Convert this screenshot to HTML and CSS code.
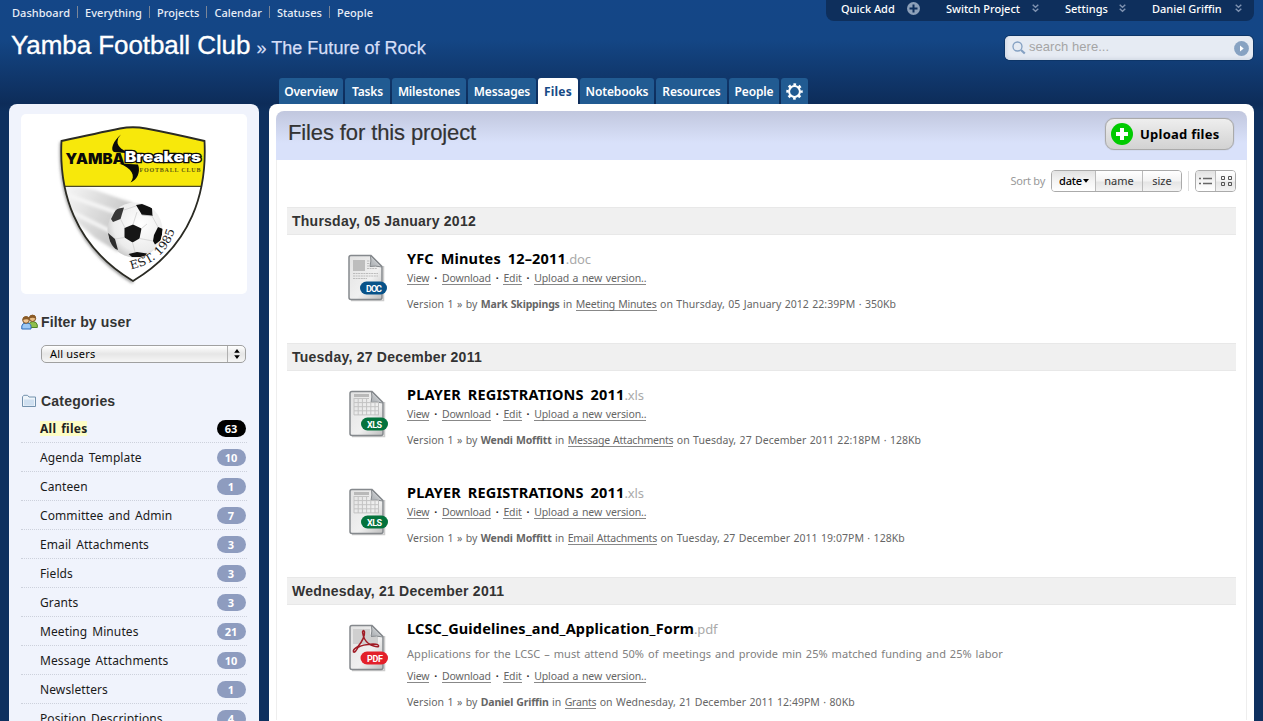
FILE: index.html
```html
<!DOCTYPE html>
<html lang="en">
<head>
<meta charset="utf-8">
<title>Files - Yamba Football Club</title>
<link rel="stylesheet" href="styles.css">
</head>
<body>
<svg class="defs" aria-hidden="true">
  <defs>
    <linearGradient id="paper" x1="0" y1="0" x2="1" y2="1"><stop offset="0" stop-color="#e2e2e2"/><stop offset=".6" stop-color="#f0f0f0"/><stop offset="1" stop-color="#bdbdbd"/></linearGradient>
    <linearGradient id="fold" x1="0" y1="1" x2="1" y2="0"><stop offset="0" stop-color="#a4a8ac"/><stop offset="1" stop-color="#e8eaec"/></linearGradient>
    <symbol id="page" viewBox="0 0 40 48">
      <path d="M3 46.600H35.500V12" fill="none" stroke="#ccc" stroke-width="1.500"/>
      <path d="M3 1.500H23L34 12.500V43.500Q34 45.500 32 45.500H3Q1 45.500 1 43.500V3.500Q1 1.500 3 1.500Z" fill="url(#paper)" stroke="#85898d" stroke-width="1.500"/>
      <path d="M22.500 1.500L34 13Q27 11.500 22 12.500Q23.500 7 22.500 1.500Z" fill="url(#fold)" stroke="#85898d"/>
    </symbol>
    <symbol id="chev" viewBox="0 0 7 9"><path d="M.7.800L3.500 3.300L6.300.800M.7 4.800L3.500 7.300L6.300 4.800" fill="none" stroke="#8094b2" stroke-width="1.400"/></symbol>
    <symbol id="xls" viewBox="0 0 40 48">
      <use href="#page" width="40" height="48"/>
      <path d="M5 5.500H20" stroke="#b9b9b9" stroke-width="3"/>
      <path d="M5 8V25M9.200 8V25M13.400 8V25M17.600 8V25M21.800 13V25M26 13V25M29.500 13V25M5 8.500H20M5 12.600H30M5 16.700H30M5 20.800H30M5 24.900H30" stroke="#c3c3c3" fill="none"/>
      <rect x="12" y="27.500" width="27" height="13" rx="6.500" fill="#04733d"/>
      <text x="18" y="37.500" textLength="15" class="ext-label">XLS</text>
    </symbol>
  </defs>
</svg>

<header class="top">
  <nav class="mainnav">
    <a>Dashboard</a><a>Everything</a><a>Projects</a><a>Calendar</a><a>Statuses</a><a>People</a>
  </nav>
  <div class="account">
    <span class="acc quick">Quick Add <svg width="13" height="13" viewBox="0 0 13 13"><circle cx="6.500" cy="6.500" r="6.500" fill="#8da0b9"/><path d="M6.500 2.500V10.500M2.500 6.500H10.500" stroke="#0e2f5c" stroke-width="2"/></svg></span>
    <span class="acc switch">Switch Project <svg width="7" height="9"><use href="#chev"/></svg></span>
    <span class="acc settings">Settings <svg width="7" height="9"><use href="#chev"/></svg></span>
    <span class="acc user">Daniel Griffin <svg width="7" height="9"><use href="#chev"/></svg></span>
  </div>
</header>

<div class="titlebar">
  <h1 class="club">Yamba Football Club <small class="sub">» The Future of Rock</small></h1>
  <div class="search">
    <svg width="14" height="14" viewBox="0 0 14 14"><circle cx="5.500" cy="5.500" r="4.500" fill="none" stroke="#84a0c2" stroke-width="1.300"/><path d="M9 9L12.800 12.500" stroke="#84a0c2" stroke-width="2.200"/></svg>
    <span class="hint">search here...</span>
    <svg width="15" height="15" viewBox="0 0 15 15"><circle cx="7.500" cy="7.500" r="7.400" fill="#87a2c2"/><path d="M6 4.500L9.700 7.500L6 10.500Z" fill="#fff"/></svg>
  </div>
</div>

<nav class="tabs">
  <a class="tab t-overview">Overview</a><a class="tab t-tasks">Tasks</a><a class="tab t-milestones">Milestones</a><a class="tab t-messages">Messages</a><a class="tab t-files on">Files</a><a class="tab t-notebooks">Notebooks</a><a class="tab t-resources">Resources</a><a class="tab t-people">People</a>
  <a class="tab t-gear"><svg width="17" height="17" viewBox="0 0 17 17"><circle cx="8.500" cy="8.500" r="7" fill="none" stroke="#fff" stroke-width="2.400" stroke-dasharray="2.700 2.800" stroke-dashoffset="1.350"/><circle cx="8.500" cy="8.500" r="5.400" fill="none" stroke="#fff" stroke-width="2"/></svg></a>
</nav>

<div class="columns">
  <aside class="side">
    <svg class="crest" width="226" height="180" viewBox="21 114 226 180">
      <defs>
        <clipPath id="shield"><path d="M61.500 141Q98 133 120 128.500Q133 126 146 128.500Q170 133 204.500 141C207 190 193 245 133 281C73 245 59 190 61.500 141Z"/></clipPath>
        <linearGradient id="trail" x1="66" y1="190" x2="125" y2="225" gradientUnits="userSpaceOnUse"><stop offset="0" stop-color="#f5f5f5"/><stop offset="1" stop-color="#c5c5c5"/></linearGradient>
        <radialGradient id="ball" cx=".6" cy=".4" r=".65"><stop offset="0" stop-color="#fff"/><stop offset=".75" stop-color="#ececec"/><stop offset="1" stop-color="#c8c8c8"/></radialGradient>
        <filter id="soft"><feGaussianBlur stdDeviation="1.800"/></filter>
        <path id="arc" d="M131 269.500C155 264 171 250 176 225"/>
        <clipPath id="ballclip"><circle cx="135" cy="230" r="27.500"/></clipPath>
      </defs>
      <path d="M61.500 142C59 190 73 246 133 282" fill="none" stroke="#888" stroke-width="3" filter="url(#soft)"/>
      <g clip-path="url(#shield)">
        <path d="M55 120H215V285H55Z" fill="#fff"/>
        <path d="M60 183L95 190L133 203L118 252L95 238L70 216Z" fill="url(#trail)" filter="url(#soft)"/>
        <path d="M64 194L118 213M68 210L112 232" stroke="#f5f5f5" stroke-width="4" filter="url(#soft)"/>
        <path d="M55 120H215V186H55Z" fill="#f7e80b"/>
        <path d="M55 186.300H215" stroke="#4c4a28" stroke-width="1.200"/>
      </g>
      <path d="M61.500 141Q98 133 120 128.500Q133 126 146 128.500Q170 133 204.500 141C207 190 193 245 133 281C73 245 59 190 61.500 141Z" fill="none" stroke="#2b2b24" stroke-width="1.800"/>
      <circle cx="135" cy="230" r="27.500" fill="url(#ball)"/>
      <g clip-path="url(#ballclip)">
        <path d="M111 219L116 209L124 207.500L120.500 219L113 222Z" fill="#383838"/>
        <path d="M136 205L142 204L152 208L152.500 216L142 215Z" fill="#111"/>
        <path d="M124.500 228L133 224.500L141.500 228.500L139.500 238.500L132.500 242.500L124.500 237.500Z" fill="#161616"/>
        <path d="M154 235L158 227L163 229L161 240L155 244.500L153 241Z" fill="#0c0c0c"/>
        <path d="M108 233L115 239L118 250L111 247Z" fill="#2d2d2d"/>
        <path d="M128.500 254L137 252L147 253.500L144 257H132Z" fill="#111"/>
        <path d="M120.500 219L125 228M137 212L133 224.500M142 215L152 216L158 227M141.500 228.500L147 224M139.500 238.500L153 241M132.500 242.500L135 252M124.500 237.500L115 239M136 206L124 210" stroke="#d0d0d0" stroke-width=".8" fill="none"/>
      </g>
      <path d="M121 134.500C113 141 110 150 114 152L131 153.500C124 151 117 147 117.500 141.500Q118 137 121 134.500Z" fill="#0a0a0a"/>
      <path d="M119 163.500L138 164.500C141 172 137 180 130.500 182.500C136 176 132 168 119 163.500Z" fill="#0a0a0a"/>
      <text x="65.500" y="164" textLength="59" lengthAdjust="spacingAndGlyphs" class="crest-yamba">YAMBA</text>
      <text x="125" y="161.500" textLength="76" lengthAdjust="spacingAndGlyphs" class="crest-breakers">Breakers</text>
      <text x="139.500" y="172" textLength="61" class="crest-fc">FOOTBALL CLUB</text>
      <text class="crest-est"><textPath href="#arc" textLength="62" lengthAdjust="spacingAndGlyphs">EST. 1985</textPath></text>
    </svg>

    <h2 class="side-title filter"><svg width="17" height="16" viewBox="0 0 17 16">
      <path d="M8 13.500V10.500Q8.500 7.500 12 7.500Q16 8 16.300 11V13.500Z" fill="#8fbf4d" stroke="#4f8428"/>
      <circle cx="11.500" cy="4.300" r="3.200" fill="#e9bd86" stroke="#7d5325"/><path d="M8.300 4.500Q8.500.8 12 1Q15 1.300 14.700 5Q12.500 3 8.300 4.500Z" fill="#8a5a26"/>
      <path d="M.8 15V12Q1.200 9 5 9Q9.600 9 10 12V15Z" fill="#9cc8f5" stroke="#2c6cb8"/>
      <circle cx="5" cy="6" r="3.300" fill="#f2c794" stroke="#7d5325"/><path d="M1.700 6Q1.600 2.200 5.200 2.300Q8.500 2.500 8.300 6.300Q6.500 4.300 1.700 6Z" fill="#8a5a26"/>
    </svg>Filter by user</h2>
    <div class="select"><span class="select-text">All users</span><span class="select-arrows"><svg width="6" height="10" viewBox="0 0 6 10"><path d="M3 0L5.800 3.800H.2ZM3 10L5.800 6.200H.2Z" fill="#000"/></svg></span></div>

    <h2 class="side-title cats-title"><svg width="17" height="14" viewBox="0 0 17 14"><path d="M1.500 12.500V2.800L2.800 1.300H6.500L8 3H14.500V12.500Z" fill="#eef4fa" stroke="#7391ad"/><path d="M3 5.500H13V11.500H3Z" fill="#cfdff0"/></svg>Categories</h2>
    <ul class="cats">
      <li class="cat on"><span class="name">All files</span><b class="count">63</b></li>
      <li class="cat"><span class="name">Agenda Template</span><b class="count">10</b></li>
      <li class="cat"><span class="name">Canteen</span><b class="count">1</b></li>
      <li class="cat"><span class="name">Committee and Admin</span><b class="count">7</b></li>
      <li class="cat"><span class="name">Email Attachments</span><b class="count">3</b></li>
      <li class="cat"><span class="name">Fields</span><b class="count">3</b></li>
      <li class="cat"><span class="name">Grants</span><b class="count">3</b></li>
      <li class="cat"><span class="name">Meeting Minutes</span><b class="count">21</b></li>
      <li class="cat"><span class="name">Message Attachments</span><b class="count">10</b></li>
      <li class="cat"><span class="name">Newsletters</span><b class="count">1</b></li>
      <li class="cat"><span class="name">Position Descriptions</span><b class="count">4</b></li>
    </ul>
  </aside>

  <main class="main">
    <div class="head">
      <h2 class="head-title">Files for this project</h2>
      <button class="upload"><svg width="22" height="22" viewBox="0 0 22 22"><circle cx="11" cy="11" r="11" fill="#00cb00"/><path d="M11 5V17M5 11H17" stroke="#fff" stroke-width="4"/></svg>Upload files</button>
    </div>
    <div class="content">
      <div class="sort">
        <span class="sort-label">Sort by</span>
        <div class="group"><span class="seg date on">date<svg width="6" height="4" viewBox="0 0 6 4"><path d="M0 0H6L3 3.800Z" fill="#000"/></svg></span><span class="seg by-name">name</span><span class="seg size">size</span></div>
        <i class="divider"></i>
        <div class="group"><span class="seg view on"><svg width="13" height="9" viewBox="0 0 13 9"><path d="M0 1.500H2M0 6.500H2" stroke="#666" stroke-width="1.500"/><path d="M4 1.500H13M4 6.500H13" stroke="#666" stroke-width="1.500"/></svg></span><span class="seg view"><svg width="12" height="12" viewBox="0 0 12 12"><path d="M1.500 1.500H4.500V4.500H1.500ZM8.500 1.500H11.500V4.500H8.500ZM1.500 7.500H4.500V10.500H1.500ZM8.500 7.500H11.500V10.500H8.500Z" fill="none" stroke="#555"/></svg></span></div>
      </div>

      <h3 class="day">Thursday, 05 January 2012</h3>
      <article class="file">
        <svg class="ico doc" width="40" height="48" viewBox="0 0 40 48">
          <use href="#page" width="40" height="48"/>
          <rect x="5" y="6" width="12" height="11" fill="#bdbdbd"/>
          <path d="M19 7H22M19 9.500H22M19 12H22M19 14.500H29M5 19.500H30M5 22H30M5 24.500H19" stroke="#bcbcbc" stroke-dasharray="2 .6"/>
          <rect x="12" y="27.500" width="27" height="13" rx="6.500" fill="#075289"/>
          <text x="18" y="37.500" textLength="16" class="ext-label">DOC</text>
        </svg>
        <div class="info">
          <h4 class="fname">YFC Minutes 12–2011<span class="ext">.doc</span></h4>
          <p class="acts"><a>View</a><i>·</i><a>Download</a><i>·</i><a>Edit</a><i>·</i><a class="new">Upload a new version..</a></p>
          <p class="meta">Version 1 » by <b>Mark Skippings</b> in <a>Meeting Minutes</a> on Thursday, 05 January 2012 22:39PM · 350Kb</p>
        </div>
      </article>

      <h3 class="day">Tuesday, 27 December 2011</h3>
      <article class="file">
        <svg class="ico" width="40" height="48"><use href="#xls"/></svg>
        <div class="info">
          <h4 class="fname">PLAYER REGISTRATIONS 2011<span class="ext">.xls</span></h4>
          <p class="acts"><a>View</a><i>·</i><a>Download</a><i>·</i><a>Edit</a><i>·</i><a class="new">Upload a new version..</a></p>
          <p class="meta">Version 1 » by <b>Wendi Moffitt</b> in <a>Message Attachments</a> on Tuesday, 27 December 2011 22:18PM · 128Kb</p>
        </div>
      </article>
      <article class="file">
        <svg class="ico" width="40" height="48"><use href="#xls"/></svg>
        <div class="info">
          <h4 class="fname">PLAYER REGISTRATIONS 2011<span class="ext">.xls</span></h4>
          <p class="acts"><a>View</a><i>·</i><a>Download</a><i>·</i><a>Edit</a><i>·</i><a class="new">Upload a new version..</a></p>
          <p class="meta">Version 1 » by <b>Wendi Moffitt</b> in <a>Email Attachments</a> on Tuesday, 27 December 2011 19:07PM · 128Kb</p>
        </div>
      </article>

      <h3 class="day">Wednesday, 21 December 2011</h3>
      <article class="file">
        <svg class="ico" width="40" height="48" viewBox="0 0 40 48">
          <use href="#page" width="40" height="48"/>
          <path d="M4 5H21V13H29V20H4Z" fill="#cfcfcf"/>
          <path d="M4.500 28Q3.500 25.500 9 22.500Q16 14 15.500 8Q14.500 5 13.500 8Q14.500 16 20 20Q27 23.500 29.500 22.500Q30.500 20 24 20Q13 20.500 9 23.500Q6 29 4.500 28Z" fill="none" stroke="#a01b25" stroke-width="1.500"/>
          <rect x="11.500" y="27.500" width="27.500" height="13" rx="6.500" fill="#e3202a"/>
          <text x="18" y="37.500" textLength="16" class="ext-label">PDF</text>
        </svg>
        <div class="info">
          <h4 class="fname">LCSC_Guidelines_and_Application_Form<span class="ext">.pdf</span></h4>
          <p class="desc">Applications for the LCSC – must attend 50% of meetings and provide min 25% matched funding and 25% labor</p>
          <p class="acts"><a>View</a><i>·</i><a>Download</a><i>·</i><a>Edit</a><i>·</i><a class="new">Upload a new version..</a></p>
          <p class="meta">Version 1 » by <b>Daniel Griffin</b> in <a>Grants</a> on Wednesday, 21 December 2011 12:49PM · 80Kb</p>
        </div>
      </article>
    </div>
  </main>
</div>
</body>
</html>
```
FILE: styles.css
```css
* { box-sizing: border-box; margin: 0; padding: 0; }
html { height: 100%; overflow: hidden; }
body {
  height: 721px;
  overflow: hidden;
  display: flex;
  flex-direction: column;
  background: #0e305f linear-gradient(#144687 0, #144685 40px, #0d2c59 104px, #0e305f 112px) no-repeat 0 0 / 100% 112px;
  font-family: "Noto Sans", "Open Sans", sans-serif;
  font-size: 11px;
  color: #222;
}
svg { display: block; flex: none; }
.defs { width: 0; height: 0; position: absolute; }

/* top bar */
.top { display: flex; justify-content: space-between; height: 24px; flex: none; padding: 0 9px 0 12px; }
.mainnav { display: flex; height: 24px; align-items: center; color: #e9eef7; font-weight: 500; letter-spacing: .04px; }
.mainnav a { padding-right: 7px; margin-right: 7px; border-right: 1px solid #7b8698; height: 12px; line-height: 13px; white-space: nowrap; }
.mainnav a:last-child { border: 0; }
.account { display: flex; width: 428px; height: 21px; background: #0e2f5c; border-radius: 0 0 8px 8px; color: #fff; font-weight: 500; padding: 0 12px 0 15px; justify-content: space-between; }
.acc { display: flex; align-items: center; justify-content: space-between; height: 16px; white-space: nowrap; }
.quick { width: 79px; }
.switch { width: 93px; }
.settings { width: 61px; }
.user { width: 90px; }

/* title */
.titlebar { display: flex; justify-content: space-between; height: 54px; flex: none; padding: 0 10px 0 11px; }
.club { font: 400 26px/30px "Liberation Sans", Arial, sans-serif; color: #fff; padding-top: 6px; letter-spacing: -.08px; -webkit-text-stroke: .35px #fff; }
.sub { font-size: 18px; letter-spacing: .02px; color: #d5def7; margin-left: -1px; -webkit-text-stroke: .25px #d5def7; }
.search { display: flex; align-items: center; width: 248px; height: 24px; margin-top: 12px; background: #e6ebf3; border-radius: 5px; padding: 0 4px 0 7px; box-shadow: 0 0 0 1px #0d3567, inset 2px -2px 3px #d5dbe6; }
.hint { flex: 1; font: 13px/20px "Liberation Sans", Arial, sans-serif; color: #a5a5a5; padding: 0 0 2px 3px; letter-spacing: .05px; }

/* tabs */
.tabs { display: flex; gap: 2px; height: 26px; flex: none; padding-left: 279px; }
.tab { display: flex; align-items: center; justify-content: center; height: 26px; padding-top: 1px; border-radius: 3px 3px 0 0; background: #215b92; color: #fff; font-weight: 600; font-size: 12px; letter-spacing: -.15px; }
.tab.on { background: #fff; color: #164a86; font-weight: 700; letter-spacing: .2px; }
.t-overview { width: 64px; }
.t-tasks { width: 45px; }
.t-milestones { width: 74px; }
.t-messages { width: 68px; }
.t-files { width: 40px; }
.t-notebooks { width: 74px; }
.t-resources { width: 71px; }
.t-people { width: 50px; }
.t-gear { width: 27px; }

.columns { display: flex; flex: 1; min-height: 0; gap: 10px; padding: 0 9px; }

/* sidebar */
.side { width: 250px; flex: none; background: #f0f3fc; border-radius: 8px 8px 0 0; padding: 10px 12px 0; }
.crest { background: #fff; border-radius: 5px; }
.crest-yamba { font: 900 14px Inter, sans-serif; fill: #0a0a0a; }
.crest-breakers { font: 900 14px Inter, sans-serif; fill: #fff; stroke: #0a0a0a; stroke-width: 2.400px; paint-order: stroke; }
.crest-fc { font: 700 6px "Liberation Serif", serif; fill: #5e5a10; }
.crest-est { font: 400 11.500px "DejaVu Serif", serif; fill: #1a1a1a; }
.side-title { display: flex; align-items: center; gap: 3px; font: 700 14px/20px "Liberation Sans", Arial, sans-serif; color: #333; height: 20px; letter-spacing: .2px; }
.filter { margin-top: 18px; letter-spacing: .15px; }
.select { display: flex; margin: 13px 0 0 20px; width: 205px; height: 18px; border: 1px solid #a0a0a0; border-radius: 5px; background: linear-gradient(#fff, #e6e6e6 50%, #f6f6f6); align-items: center; }
.select-text { flex: 1; padding-left: 8px; letter-spacing: .2px; color: #000; line-height: 16px; }
.select-arrows { width: 18px; height: 16px; border-left: 1px solid #b0b0b0; display: flex; align-items: center; justify-content: center; }
.cats-title { margin-top: 28px; }
.cats { list-style: none; padding-top: 3px; }
.cat { display: flex; align-items: center; justify-content: space-between; height: 29px; padding: 0 1px 0 19px; border-bottom: 1px dotted #cdd1dc; font-size: 12px; letter-spacing: .1px; word-spacing: 1.600px; color: #1a1a1a; }
.cat.on .name { background: #fdfdc5; font-weight: 700; letter-spacing: .25px; line-height: 15px; color: #222; }
.count { width: 29px; height: 17px; border-radius: 9px; background: #8e9cbf; color: #fff; text-align: center; padding-right: 1px; font-size: 11px; line-height: 17px; letter-spacing: 0; }
.cat.on .count { background: #000; }

/* main panel */
.main { width: 985px; background: #fff; border-radius: 8px 8px 0 0; padding: 7px 7px 0; }
.head { display: flex; justify-content: space-between; height: 49px; border-radius: 8px 8px 0 0; background: linear-gradient(#c1c7de, #d9e1fa 65%); padding: 7px 13px 0 12px; }
.head-title { font: 400 22px/30px "Liberation Sans", Arial, sans-serif; letter-spacing: -.12px; color: #333; -webkit-text-stroke: .2px #333; }
.upload { display: flex; align-items: center; gap: 7px; width: 129px; height: 32px; border: 1px solid #aaa; border-radius: 9px; background: linear-gradient(#eee, #d2d2d2); padding-left: 5px; font: 700 13px "Noto Sans", sans-serif; letter-spacing: .25px; color: #000; white-space: nowrap; box-shadow: 0 0 1px #999; }
.content { border: 1px solid #eee; border-width: 0 1px; padding: 10px 10px 0; height: 560px; }
.sort { display: flex; justify-content: flex-end; height: 37px; }
.sort-label { line-height: 22px; color: #999; letter-spacing: -.25px; margin-right: 6px; }
.group { display: flex; height: 22px; border: 1px solid #aaa; border-radius: 4px; overflow: hidden; }
.seg { display: flex; align-items: center; justify-content: center; background: linear-gradient(#fff, #f3f3f3 50%, #e5e5e5 55%, #f3f3f3); color: #333; border-left: 1px solid #bbb; line-height: 18px; padding-bottom: 1px; }
.seg:first-child { border: 0; }
.seg.on { background: linear-gradient(#e2e2e2, #f4f4f4 50%, #fff); color: #000; }
.date { width: 43px; gap: 1px; font-weight: 500; letter-spacing: -.15px; padding-left: 1px; }
.by-name { width: 47px; }
.size { width: 39px; }
.view { width: 20px; padding: 0; }
.view.on { width: 19px; }
.divider { width: 1px; height: 20px; margin: 1px 6px; background: #ddd; }

.day { height: 28px; border: 1px solid #e8e8e8; border-width: 1px 0; background: #f0f0f0; padding-left: 5px; font: 700 14px/26px "Liberation Sans", Arial, sans-serif; letter-spacing: .24px; color: #333; }
.file { display: flex; height: 98px; }
.day + .file { margin-top: 10px; }
.ico { margin: 9px 18px 0 62px; }
.ico.doc { margin: 9px 19px 0 61px; }
.ext-label { font: 700 9px Roboto, sans-serif; fill: #fff; }
.fname { font-weight: 700; font-size: 14.500px; line-height: 20px; margin-top: 3px; letter-spacing: .15px; word-spacing: 3px; color: #000; }
.ext { font-weight: 400; font-size: 13px; color: #aaa; letter-spacing: -.15px; }
.acts, .meta { font-size: 10.500px; line-height: 18px; height: 18px; color: #666; white-space: nowrap; }
.acts a, .meta a { border-bottom: 1px solid #888; line-height: 12px; display: inline-block; }
.acts a { letter-spacing: -.13px; }
.acts i { display: inline-block; width: 12.500px; text-align: center; font-style: normal; font-weight: 700; color: #222; }
.acts .new { letter-spacing: -.12px; word-spacing: 1px; }
.meta { margin-top: 8px; letter-spacing: .03px; word-spacing: .65px; }
.meta a { letter-spacing: -.22px; }
.meta b { letter-spacing: -.18px; }
.desc { font-size: 11px; line-height: 18px; margin: 6px 0 4px; letter-spacing: .045px; word-spacing: 1px; color: #808080; white-space: nowrap; }
```
